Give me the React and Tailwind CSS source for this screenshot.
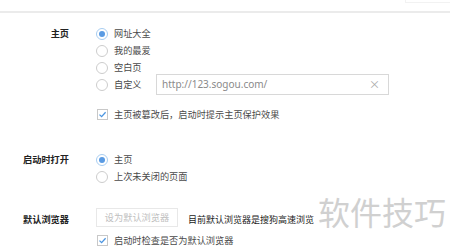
import React from "react";

const font = { fontFamily: '"Noto Sans CJK SC", "Noto Sans", sans-serif' };

function Radio({ checked }) {
  return (
    <span className="shrink-0 w-[12px] h-[12px] flex items-center justify-center">
      <svg width="12" height="12" viewBox="0 0 12 12">
        <circle cx="6" cy="6" r="5.5" fill="#fff" stroke={checked ? "#a8cdf0" : "#cccccc"} strokeWidth="1" />
        {checked && <circle cx="6" cy="6" r="3" fill="#5a9be3" />}
      </svg>
    </span>
  );
}

function Check() {
  return (
    <span className="shrink-0 w-[11px] h-[11px] flex items-center justify-center">
      <svg width="11" height="11" viewBox="0 0 11 11">
        <rect x="0.5" y="0.5" width="10" height="10" fill="#fff" stroke="#c8c8c8" />
        <path d="M2.5 5.6 L4.6 7.6 L8.6 3.2" fill="none" stroke="#4a94e0" strokeWidth="1.3" />
      </svg>
    </span>
  );
}

function Opt({ checked, children }) {
  return (
    <div className="flex items-center h-[17px]">
      <Radio checked={checked} />
      <span className="ml-[6px] text-[#4a4a4a] whitespace-nowrap">{children}</span>
    </div>
  );
}

export default function App() {
  return (
    <div className="relative w-[450px] h-[248px] bg-white overflow-hidden text-[9.2px] leading-[17px]" style={font}>
      <div className="h-[11px] flex justify-end">
        <div className="w-[45px] h-[3px] border-l border-b border-[#f2f2f2]" />
      </div>
      <div className="h-[2px] bg-[#ebebeb]" />

      <div className="flex flex-col">
        <div className="flex mt-[12px]">
          <div className="w-[69px] shrink-0 text-right font-bold text-[#222] leading-[17px]">主页</div>
          <div className="ml-[27px] flex flex-col">
            <Opt checked>网址大全</Opt>
            <Opt>我的最爱</Opt>
            <Opt>空白页</Opt>
            <div className="flex items-center h-[17px]">
              <Radio />
              <span className="ml-[6px] w-[42px] text-[#4a4a4a] whitespace-nowrap">自定义</span>
              <div className="w-[233px] h-[21px] border border-[#d8d8d8] flex items-center justify-between pl-[5px] pr-[8px]">
                <span className="text-[#8a8a8a] text-[10px]" style={{ fontFamily: '"Noto Sans", sans-serif' }}>http://123.sogou.com/</span>
                <span className="text-[#aaa] text-[11px]">×</span>
              </div>
            </div>
            <div className="flex items-center h-[17px] mt-[13px]">
              <span className="ml-[1px]"><Check /></span>
              <span className="ml-[6px] text-[#4a4a4a] whitespace-nowrap">主页被篡改后，启动时提示主页保护效果</span>
            </div>
          </div>
        </div>

        <div className="flex mt-[28px]">
          <div className="w-[69px] shrink-0 text-right font-bold text-[#222] leading-[17px]">启动时打开</div>
          <div className="ml-[27px] flex flex-col">
            <Opt checked>主页</Opt>
            <Opt>上次未关闭的页面</Opt>
          </div>
        </div>

        <div className="flex mt-[23px]">
          <div className="w-[69px] shrink-0 text-right font-bold text-[#222] h-[19px] flex items-center justify-end pt-[3px]">默认浏览器</div>
          <div className="ml-[27px] flex flex-col">
            <div className="flex items-center h-[19px]">
              <div className="w-[82px] h-[19px] border border-[#e8e8e8] flex items-center justify-center text-[#c0c0c0]">设为默认浏览器</div>
              <span className="ml-[10px] text-[#1a1a1a] text-[9px] whitespace-nowrap pt-[3px]">目前默认浏览器是搜狗高速浏览</span>
            </div>
            <div className="flex items-center h-[17px] mt-[5px]">
              <span className="ml-[1px]"><Check /></span>
              <span className="ml-[6px] text-[#4a4a4a] whitespace-nowrap">启动时检查是否为默认浏览器</span>
            </div>
          </div>
        </div>
      </div>

      <div className="absolute left-[318px] top-[195px] text-[32px] leading-[32px] text-[#d0d0d0] whitespace-nowrap">软件技巧</div>
    </div>
  );
}
